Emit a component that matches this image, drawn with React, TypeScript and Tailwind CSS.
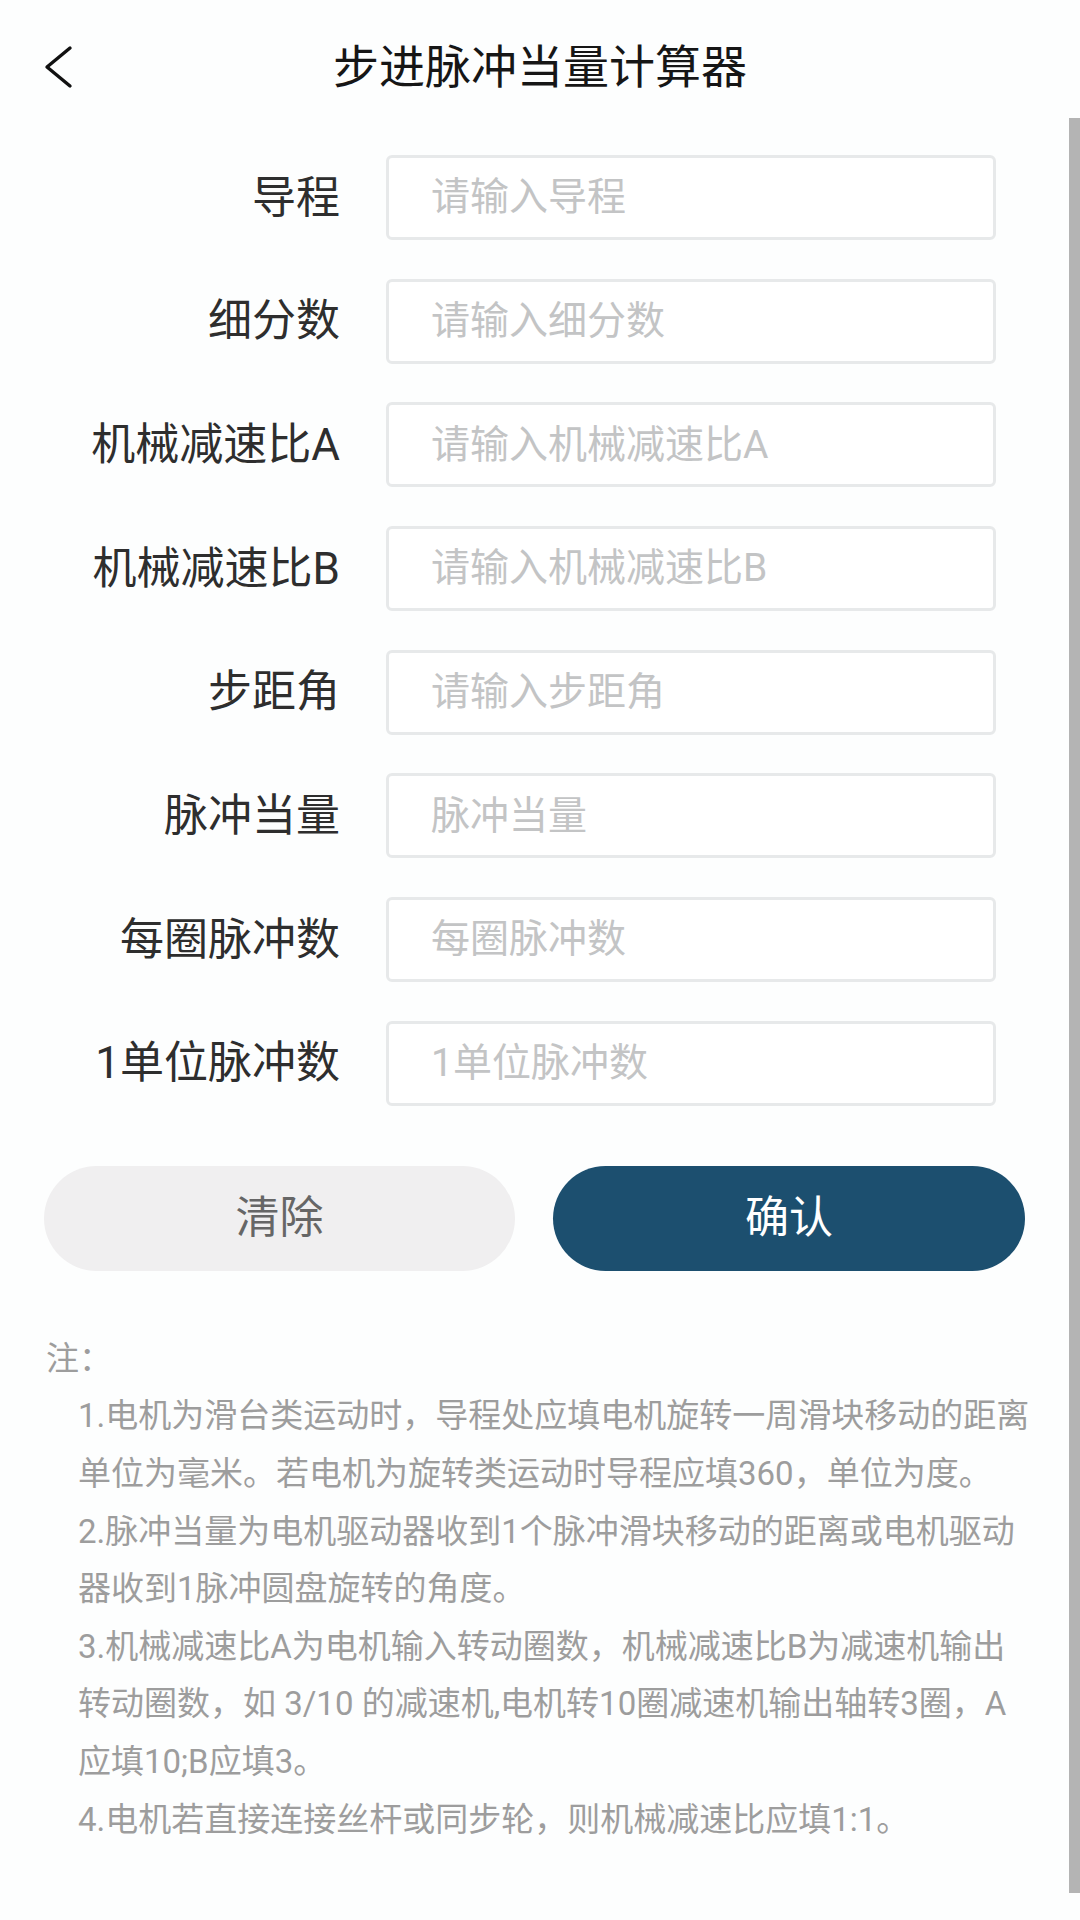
import React from "react";

const FIELDS = [
  { label: "导程", placeholder: "请输入导程" },
  { label: "细分数", placeholder: "请输入细分数" },
  { label: "机械减速比A", placeholder: "请输入机械减速比A" },
  { label: "机械减速比B", placeholder: "请输入机械减速比B" },
  { label: "步距角", placeholder: "请输入步距角" },
  { label: "脉冲当量", placeholder: "脉冲当量" },
  { label: "每圈脉冲数", placeholder: "每圈脉冲数" },
  { label: "1单位脉冲数", placeholder: "1单位脉冲数" },
];

// note lines, broken where the screenshot breaks them
const NOTES = [
  "1.电机为滑台类运动时，导程处应填电机旋转一周滑块移动的距离",
  "单位为毫米。若电机为旋转类运动时导程应填360，单位为度。",
  "2.脉冲当量为电机驱动器收到1个脉冲滑块移动的距离或电机驱动",
  "器收到1脉冲圆盘旋转的角度。",
  "3.机械减速比A为电机输入转动圈数，机械减速比B为减速机输出",
  "转动圈数，如 3/10 的减速机,电机转10圈减速机输出轴转3圈，A",
  "应填10;B应填3。",
  "4.电机若直接连接丝杆或同步轮，则机械减速比应填1:1。",
];

export default function App() {
  return (
    <div className="relative w-[1080px] h-[1920px] overflow-hidden bg-[#fdfefe] font-['Roboto','Noto_Sans_CJK_SC',sans-serif]">
      {/* Header */}
      <div className="relative h-[134px] flex items-center justify-center">
        <button className="absolute left-[38px] top-[38px] w-[44px] h-[58px] flex items-center justify-center">
          <svg width="44" height="58" viewBox="0 0 44 58" fill="none">
            <path
              d="M32 10 L9 29 L32 48"
              stroke="#111"
              strokeWidth="3.4"
              strokeLinecap="round"
              strokeLinejoin="round"
            />
          </svg>
        </button>
        <h1 className="text-[46px] leading-none text-[#161616]">
          步进脉冲当量计算器
        </h1>
      </div>

      {/* Form */}
      <div className="mt-[21px] flex flex-col gap-[38.7px]">
        {FIELDS.map((f) => (
          <div key={f.label} className="flex items-center h-[85px]">
            <div className="w-[340px] text-right text-[44px] leading-none text-[#2e2e2e] whitespace-nowrap">
              {f.label}
            </div>
            <div className="ml-[46px] w-[610px] h-[85px] rounded-[6px] border-[3px] border-[#e7e9ea] bg-white flex items-center pl-[42px]">
              <input
                className="w-full bg-transparent outline-none text-[39px] text-[#333] placeholder:text-[#c3c4c5]"
                placeholder={f.placeholder}
              />
            </div>
          </div>
        ))}
      </div>

      {/* Buttons */}
      <div className="mt-[60px] px-[44px] flex gap-[38px]">
        <button className="w-[471px] h-[105px] rounded-full bg-[#f0eff0] text-[44px] text-[#666] leading-none">
          清除
        </button>
        <button className="w-[472px] h-[105px] rounded-full bg-[#1c4f6f] text-[44px] text-white leading-none">
          确认
        </button>
      </div>

      {/* Notes */}
      <div className="mt-[59px] pl-[46px] text-[33px] leading-[57.6px] text-[#9d9d9d]">
        <div>注：</div>
        <div className="pl-[32px]">
          {NOTES.map((line, i) => (
            <div key={i} className="whitespace-nowrap">
              {line}
            </div>
          ))}
        </div>
      </div>

      {/* Scrollbar */}
      <div className="absolute right-0 top-[118px] w-[11px] h-[1775px] bg-[#b4b4b4]" />
    </div>
  );
}
